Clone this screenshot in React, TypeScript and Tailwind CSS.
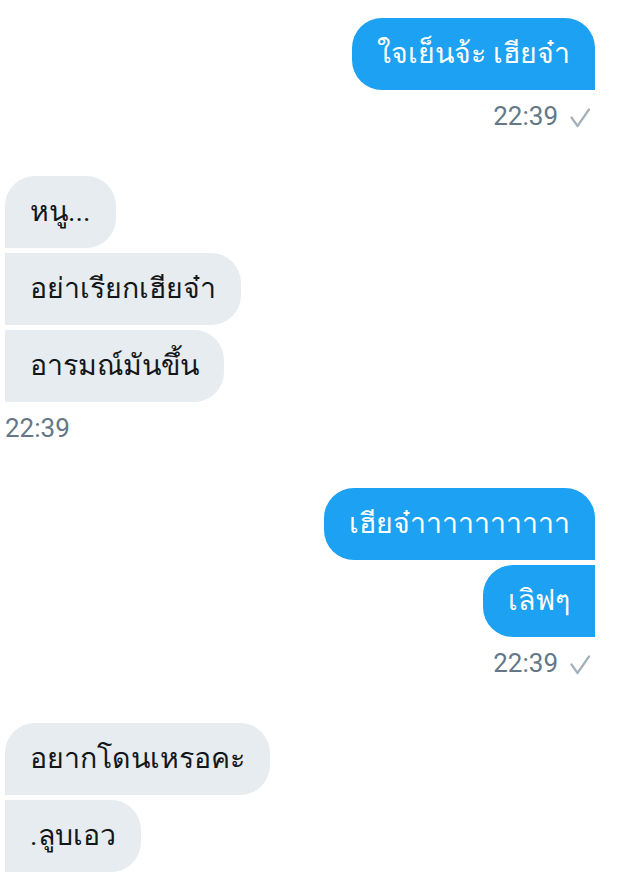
import { Fragment } from "react";

type Msg = { text: string; corners: string };
type Group = { mine: boolean; time: string; msgs: Msg[] };

const groups: Group[] = [
  {
    mine: true,
    time: "22:39",
    msgs: [{ text: "ใจเย็นจ้ะ เฮียจ๋า", corners: "rounded-br-none" }],
  },
  {
    mine: false,
    time: "22:39",
    msgs: [
      { text: "หนู...", corners: "rounded-bl-none" },
      { text: "อย่าเรียกเฮียจ๋า", corners: "rounded-tl-none rounded-bl-none" },
      { text: "อารมณ์มันขึ้น", corners: "rounded-tl-none rounded-bl-none" },
    ],
  },
  {
    mine: true,
    time: "22:39",
    msgs: [
      { text: "เฮียจ๋าาาาาาาาาา", corners: "rounded-br-none" },
      { text: "เลิฟๆ", corners: "rounded-tr-none rounded-br-none" },
    ],
  },
  {
    mine: false,
    time: "",
    msgs: [
      { text: "อยากโดนเหรอคะ", corners: "rounded-bl-none" },
      { text: ".ลูบเอว", corners: "rounded-tl-none rounded-bl-none" },
    ],
  },
];

// read receipt tick
const Check = () => (
  <svg width="20" height="20" viewBox="0 0 20 20" fill="none" className="text-[#a3b1bb] mt-[4px]">
    <path d="M1.5 9.5 L7.5 18 L19 1.5" stroke="currentColor" strokeWidth="2.2" strokeLinecap="round" strokeLinejoin="round" />
  </svg>
);

const App = () => {
  return (
    <div
      className="min-h-[886px] w-[619px] bg-white pl-[5px] pr-[24px] pt-[18px] flex flex-col gap-[44px] overflow-hidden"
      style={{ fontFamily: "Roboto, 'Noto Sans', sans-serif" }}
    >
      {groups.map((g, gi) => (
        <div key={gi} className={`flex flex-col gap-[5px] ${g.mine ? "items-end" : "items-start"}`}>
          {g.msgs.map((m, mi) => (
            <Fragment key={mi}>
              <div
                className={`h-[72px] flex items-center px-[25px] text-[28.5px] rounded-[30px] whitespace-nowrap ${m.corners} ${
                  g.mine ? "bg-[#1da1f2] text-white" : "bg-[#e6ecf0] text-[#14171a]"
                }`}
              >
                {m.text}
              </div>
            </Fragment>
          ))}
          {g.time && (
            <div
              className={`mt-[5px] flex items-center gap-[12px] h-[32px] text-[26px] leading-[32px] text-[#657786] ${
                g.mine ? "mr-[5px]" : ""
              }`}
            >
              <span>{g.time}</span>
              {g.mine && <Check />}
            </div>
          )}
        </div>
      ))}
    </div>
  );
};

export default App;
